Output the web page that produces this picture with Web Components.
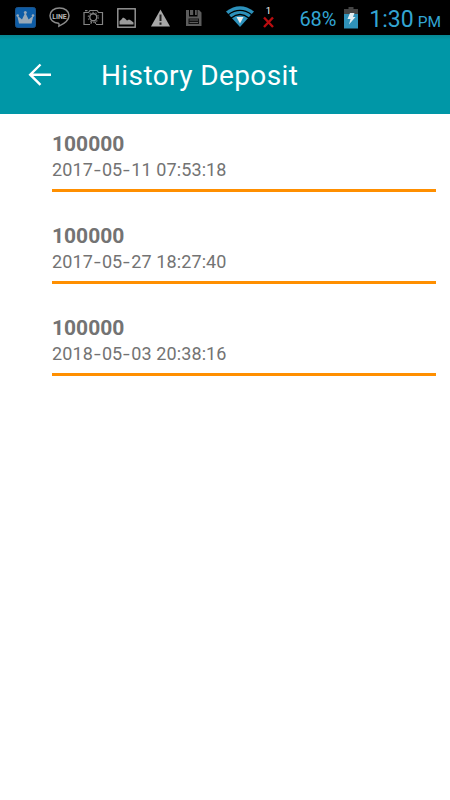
<!DOCTYPE html>
<html lang="en">
<head>
<meta charset="utf-8">
<title>History Deposit</title>
<style>
  body {
    margin: 0;
    background: #fff;
    font-family: Roboto, "Noto Sans", sans-serif;
  }
</style>
</head>
<body>
<hd-screen>
  <hd-status-bar slot="status" battery="68%" time="1:30" period="PM"></hd-status-bar>
  <hd-app-bar slot="header">History Deposit</hd-app-bar>
  <hd-deposit date="2017-05-11 07:53:18">100000</hd-deposit>
  <hd-deposit date="2017-05-27 18:27:40">100000</hd-deposit>
  <hd-deposit date="2018-05-03 20:38:16">100000</hd-deposit>
</hd-screen>

<script>
class HdScreen extends HTMLElement {
  constructor() {
    super();
    this.attachShadow({ mode: 'open' });
  }

  connectedCallback() {
    this.shadowRoot.innerHTML = `
      <style>
        :host {
          display: flex;
          flex-direction: column;
          height: 800px;
          overflow: hidden;
        }
        main {
          display: flex;
          flex-direction: column;
          padding: 0 14px 0 52px;
        }
      </style>
      <slot name="status"></slot>
      <slot name="header"></slot>
      <main><slot></slot></main>
    `;
  }
}

const ICONS = {
  crown: `
    <rect x=".5" y=".5" width="20" height="20" rx="2" fill="#0d5ca6" stroke="#1c5288"/>
    <path d="M4 16.500 2.200 8.500 7 12.500 10.300 5.500l3.300 7 4.800-4-1.800 8z" fill="#98a9b8"/>
    <circle cx="10.300" cy="5.500" r="1.500" fill="#98a9b8"/>
    <circle cx="2.700" cy="8.500" r="1.300" fill="#98a9b8"/>
    <circle cx="18" cy="8.500" r="1.300" fill="#98a9b8"/>`,
  line: `
    <path d="M10.500 1C5 1 1 4.300 1 8.700c0 4.100 3.500 7 8.500 7.600 1 .3.500 1.700.4 2.900C14 17.200 20 13.500 20 8.700 20 4.300 16 1 10.500 1z" fill="none" stroke="#8a8a8a" stroke-width="1.500"/>
    <text x="10.500" y="11.500" text-anchor="middle" font-size="7.500" font-weight="700" fill="#b8b8b8" textLength="14.500" lengthAdjust="spacingAndGlyphs">LINE</text>`,
  camera: `
    <g fill="none" stroke="#858585" stroke-width="1.200">
      <path d="M7 15.500H1V3.500h4.500L7 1.500h7l1.500 2h4v12h-6.500M2 1.700h2.500"/>
      <circle cx="10.300" cy="8.300" r="3.500" stroke-width="1.400"/>
      <circle cx="10.300" cy="8.300" r="5" stroke="#666" stroke-width="1.200" stroke-dasharray="1.500 1.640"/>
      <path d="M8.800 12.500l-1 2.200M11.800 12.500l1 2.200"/>
    </g>`,
  picture: `
    <rect x=".8" y=".8" width="17.400" height="18.400" fill="none" stroke="#9b9b9b" stroke-width="1.400"/>
    <path d="M2.500 16.500v-3.500l1.500-1 2-2.500 2 1 2 2 2-1 2 1 2.500 2v2z" fill="#9b9b9b"/>`,
  warning: `
    <path d="M9.500.5 19 17.500H0z" fill="#a8a8a8"/>
    <path d="M9.500 5.500v6.500M9.500 13.500v2.200" stroke="#222" stroke-width="2"/>`,
  save: `
    <path d="M0 0h3v6.500h8.500V0H13l2.500 2.500V16H0z" fill="#5c5c5c"/>
    <path d="M4 0h3.200v5H4zM9 0h1.800v5H9z" fill="#5c5c5c"/>
    <path d="M2.500 8.500h10.500v5.500H2.500z" fill="#111"/>
    <path d="M3.500 10h8.500M3.500 12.500h8.500" stroke="#5c5c5c" stroke-width="1.100"/>`,
  wifi: `
    <path d="M0 5.500Q14 -5 28 5.500L14 21z" fill="#2c91bb"/>
    <g fill="none" stroke="#000" stroke-width="1.300">
      <path d="M2.300 8.700q11.700-8.500 23.400 0M5.200 12q8.800-7 17.600 0"/>
    </g>
    <path d="M10.500 11h7L14 17.500z" fill="#eee"/>`,
  sim: `
    <text x="6.500" y="7.500" text-anchor="middle" font-size="9.500" fill="#fff">1</text>
    <path d="M2 11.500l9 9.500M11 11.500l-9 9.500" stroke="#b90d10" stroke-width="2.400"/>`,
  battery: `
    <path d="M4.500 0h5v2H14v6H0V2h4.500z" fill="#444"/>
    <path d="M0 7h14v14.500H0z" fill="#2f91b8"/>
    <path d="M6 6h4.500L9 10h2.500L5 17.500l1.500-5.500H3.500z" fill="#e2edf1"/>`
};

class HdIcon extends HTMLElement {
  constructor() {
    super();
    this.attachShadow({ mode: 'open' });
  }

  connectedCallback() {
    const [width, height] = this.getAttribute('size').split(' ');
    this.shadowRoot.innerHTML = `
      <style>
        :host { display: block; flex: none; }
        svg { display: block; }
      </style>
      <svg width="${width}" height="${height}" viewBox="0 0 ${width} ${height}">${ICONS[this.getAttribute('name')]}</svg>
    `;
  }
}

class HdStatusBar extends HTMLElement {
  constructor() {
    super();
    this.attachShadow({ mode: 'open' });
  }

  connectedCallback() {
    this.shadowRoot.innerHTML = `
      <style>
        :host {
          display: flex;
          justify-content: space-between;
          height: 35px;
          padding: 0 9px 0 15px;
          background: #000;
          color: #33a5d3;
        }
        .notifications, .system {
          display: flex;
          align-items: center;
        }
        .notifications { gap: 13px; }
        .warning { margin-left: 2px; }
        .save { margin-left: 3px; }
        .sim { margin-left: 8px; }
        .percent {
          margin-left: 23px;
          padding-top: 3px;
          font-size: 20px;
          letter-spacing: -0.1px;
        }
        .battery { margin: 0 11px 0 8px; }
        .clock {
          display: flex;
          align-items: baseline;
          gap: 4px;
          padding-top: 3px;
          font-size: 23px;
        }
        .period { font-size: 15.500px; }
      </style>
      <div class="notifications">
        <hd-icon name="crown" size="21 21"></hd-icon>
        <hd-icon name="line" size="21 21"></hd-icon>
        <hd-icon name="camera" size="21 17"></hd-icon>
        <hd-icon name="picture" size="19 20"></hd-icon>
        <hd-icon class="warning" name="warning" size="19 18"></hd-icon>
        <hd-icon class="save" name="save" size="16 16"></hd-icon>
      </div>
      <div class="system">
        <hd-icon name="wifi" size="28 23"></hd-icon>
        <hd-icon class="sim" name="sim" size="14 24"></hd-icon>
        <span class="percent">${this.getAttribute('battery')}</span>
        <hd-icon class="battery" name="battery" size="14 22"></hd-icon>
        <div class="clock">
          <span>${this.getAttribute('time')}</span>
          <span class="period">${this.getAttribute('period')}</span>
        </div>
      </div>
    `;
  }
}

class HdAppBar extends HTMLElement {
  constructor() {
    super();
    this.attachShadow({ mode: 'open' });
  }

  connectedCallback() {
    this.shadowRoot.innerHTML = `
      <style>
        :host {
          display: flex;
          align-items: center;
          gap: 50px;
          height: 79px;
          padding-left: 28px;
          box-sizing: border-box;
          background: linear-gradient(#078692, #0097a7 5px);
          color: #fff;
        }
        svg { flex: none; }
        h1 {
          margin: 0;
          padding-top: 2px;
          font-size: 28px;
          font-weight: 400;
          letter-spacing: 0.4px;
          line-height: 36px;
        }
      </style>
      <svg width="23" height="23" viewBox="0 0 23 23" fill="none" stroke="#fff" stroke-width="2.400">
        <path d="M12.500 1.500 2.200 11.700l10.300 10.200M2.500 11.700H23"/>
      </svg>
      <h1><slot></slot></h1>
    `;
  }
}

class HdDeposit extends HTMLElement {
  constructor() {
    super();
    this.attachShadow({ mode: 'open' });
  }

  connectedCallback() {
    const date = this.getAttribute('date').replace(/-/g, '<i>-</i>');
    this.shadowRoot.innerHTML = `
      <style>
        :host {
          display: flex;
          flex-direction: column;
          height: 92px;
          padding-top: 17px;
          box-sizing: border-box;
          color: #737373;
        }
        .amount {
          font-size: 21px;
          font-weight: 700;
          line-height: 26px;
        }
        .date {
          font-size: 18px;
          line-height: 26px;
          letter-spacing: 0.1px;
          padding-bottom: 6px;
          border-bottom: 3px solid #ff8f00;
        }
        i {
          display: inline-block;
          width: 9px;
          font-style: normal;
          text-align: center;
          transform: scaleX(1.35);
        }
      </style>
      <div class="amount"><slot></slot></div>
      <div class="date">${date}</div>
    `;
  }
}

customElements.define('hd-icon', HdIcon);
customElements.define('hd-status-bar', HdStatusBar);
customElements.define('hd-app-bar', HdAppBar);
customElements.define('hd-deposit', HdDeposit);
customElements.define('hd-screen', HdScreen);
</script>
</body>
</html>
